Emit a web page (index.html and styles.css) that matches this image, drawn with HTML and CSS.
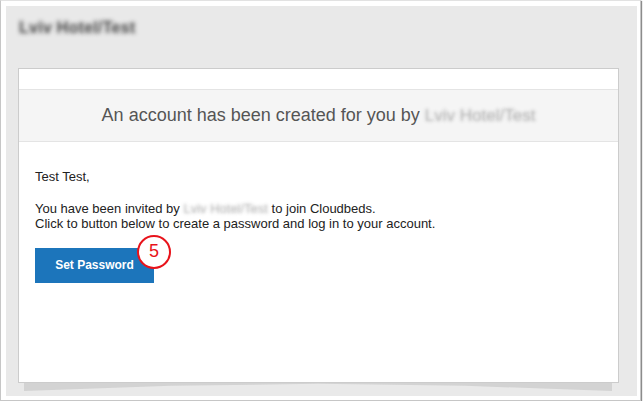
FILE: index.html
```html
<!DOCTYPE html>
<html>
<head>
<meta charset="utf-8">
<link rel="stylesheet" href="styles.css">
</head>
<body>
<div class="frame">
  <div class="panel">
    <div class="header"><span class="blur hotel">Lviv Hotel/Test</span></div>
    <div class="card">
      <div class="banner"><span>An account has been created for you by <span class="blur faint big">Lviv Hotel/Test</span></span></div>
      <div class="content">
        <p class="greet">Test Test,</p>
        <p class="msg">You have been invited by <span class="blur faint">Lviv Hotel/Test</span> to join Cloudbeds.<br>Click to button below to create a password and log in to your account.</p>
        <div class="btn-wrap">
          <span class="btn">Set Password</span>
          <span class="step">5</span>
        </div>
      </div>
    </div>
    <div class="lift"></div>
  </div>
</div>
</body>
</html>
```
FILE: styles.css
```css
* { box-sizing: border-box; }
html, body { margin: 0; padding: 0; background: #fff; }
body { font-family: "Liberation Sans", Arial, sans-serif; }

.frame {
  width: 641px;
  height: 401px;
  border: 1px solid #c6c6c6;
  border-top-color: #e2e2e2;
  box-shadow: 1px 1px 1px rgba(0,0,0,0.45);
  padding: 5px 3px 4px 5px;
  background: #fff;
}

.panel {
  background: #e9e9e9;
  height: 100%;
  padding: 0 18px 4px 12px;
}

.header {
  height: 62px;
  display: flex;
  align-items: flex-start;
  padding: 12px 0 0 1px;
}

.blur { color: transparent; }
.hotel { font-weight: bold; font-size: 16.5px; line-height: 19px; text-shadow: 0 0 4px rgba(60,60,60,0.95); }
.faint { text-shadow: 0 0 3.5px rgba(160,160,160,0.9); }
.big { font-size: 17px; }

.card {
  background: #fff;
  border: 1px solid #cccccc;
  height: 315px;
  padding-top: 20px;
  position: relative;
}

.banner {
  height: 53px;
  background: #f5f5f5;
  border-top: 1px solid #e4e4e4;
  border-bottom: 1px solid #e4e4e4;
  display: flex;
  align-items: center;
  justify-content: center;
  font-size: 18px;
  color: #555;
  padding-bottom: 1px;
}

.content {
  padding: 27px 16px 0 16px;
  font-size: 13px;
  line-height: 15px;
  color: #222;
}

.content p { margin: 0 0 17px 0; }

.btn-wrap { position: relative; display: inline-block; }

.btn {
  display: flex;
  align-items: center;
  justify-content: center;
  width: 119px;
  height: 35px;
  background: #1c75bb;
  color: #fff;
  font-weight: bold;
  font-size: 12px;
}

.step {
  position: absolute;
  left: 102px;
  top: -13px;
  width: 34px;
  height: 34px;
  border: 2px solid #e8131b;
  border-radius: 50%;
  background: #fff;
  color: #e8131b;
  font-size: 18px;
  line-height: 28px;
  text-align: center;
}

.lift {
  height: 8px;
  margin: 0 7px 0 6px;
  background: #d3d3d3;
  clip-path: polygon(0 0, 100% 0, 100% 100%, 75% 35%, 50% 10%, 25% 35%, 0 100%);
}
```
